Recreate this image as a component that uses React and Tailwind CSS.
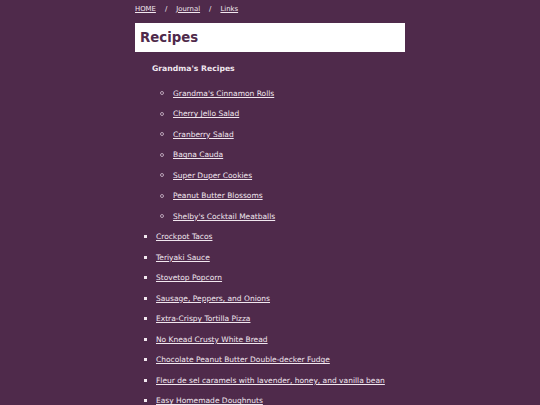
const nav = ["HOME", "Journal", "Links"];

const grandmas = [
  "Grandma's Cinnamon Rolls",
  "Cherry Jello Salad",
  "Cranberry Salad",
  "Bagna Cauda",
  "Super Duper Cookies",
  "Peanut Butter Blossoms",
  "Shelby's Cocktail Meatballs",
];

const recipes = [
  "Crockpot Tacos",
  "Teriyaki Sauce",
  "Stovetop Popcorn",
  "Sausage, Peppers, and Onions",
  "Extra-Crispy Tortilla Pizza",
  "No Knead Crusty White Bread",
  "Chocolate Peanut Butter Double-decker Fudge",
  "Fleur de sel caramels with lavender, honey, and vanilla bean",
  "Easy Homemade Doughnuts",
];

export default function App() {
  return (
    <div className="min-h-[405px] bg-[#4f2a4b] font-['DejaVu_Sans',sans-serif] text-[#f1e7ef]">
      <div className="mx-auto w-[270px] pt-[3px]">
        {/* breadcrumb */}
        <nav className="flex h-[12px] items-center text-[6.9px]">
          {nav.map((item, i) => (
            <span key={item} className="flex items-center">
              {i > 0 && <span className="px-[9px]">/</span>}
              <a href="#" className="underline">{item}</a>
            </span>
          ))}
        </nav>

        <header className="mt-[8px] flex h-[29px] items-center bg-white px-[5px]">
          <h1 className="text-[13.3px] font-bold text-[#4f2a4b]">Recipes</h1>
        </header>

        <div className="pl-[17px] pt-[11px] text-[7.7px] font-bold leading-[12px]">
          Grandma's Recipes
        </div>

        <ul className="mt-[8px] text-[7.5px]">
          {grandmas.map((r) => (
            <li key={r} className="flex h-[20.53px] items-center pl-[25px]">
              <span className="mr-[9px] h-[4px] w-[4px] rounded-full border border-[#b9a2b6]" />
              <a href="#" className="underline">{r}</a>
            </li>
          ))}
          {recipes.map((r) => (
            <li key={r} className="flex h-[20.53px] items-center pl-[9px]">
              <span className="mr-[9px] h-[3px] w-[3px] bg-[#f1e7ef]" />
              <a href="#" className="underline">{r}</a>
            </li>
          ))}
        </ul>
      </div>
    </div>
  );
}
